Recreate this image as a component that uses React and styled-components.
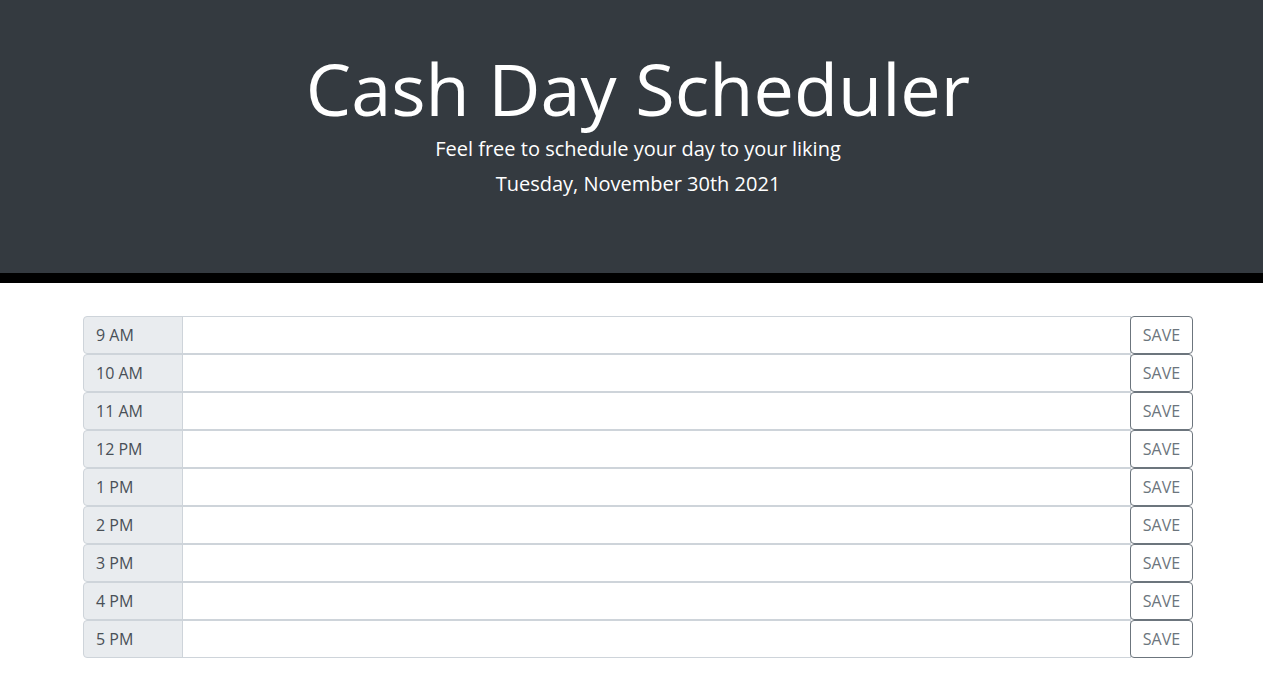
import React from "react";
import styled, { createGlobalStyle } from "styled-components";

const Global = createGlobalStyle`
  html, body { margin: 0; padding: 0; background: #fff; }
  body { font-family: "Open Sans", "Liberation Sans", sans-serif; color: #212529; }
  * { box-sizing: border-box; }
`;

const Header = styled.header`
  background: #343a40;
  border-bottom: 10px solid #000;
  height: 283px;
  padding: 45px 0 0 13px;
  text-align: center;
  color: #fff;
`;

const Title = styled.h1`
  margin: 0;
  font-size: 72px;
  font-weight: 400;
  line-height: 86px;
`;

const Lead = styled.p`
  margin: 0;
  font-size: 20px;
  font-weight: 400;
  line-height: 35px;
`;

const Main = styled.main`
  padding: 33px 0 0 13px;
`;

const Container = styled.div`
  width: 1110px;
  margin: 0 auto;
`;

const Row = styled.div`
  display: flex;
  height: 38px;
`;

const Hour = styled.div`
  width: 100px;
  flex: none;
  display: flex;
  align-items: center;
  padding: 0 12px;
  background: #e9ecef;
  border: 1px solid #ced4da;
  border-radius: 4px 0 0 4px;
  color: #495057;
  font-size: 16px;
`;

const Text = styled.textarea`
  flex: 1;
  min-width: 0;
  height: 38px;
  margin: 0 0 0 -1px;
  border: 1px solid #ced4da;
  border-radius: 0;
  resize: none;
  font-family: inherit;
  font-size: 16px;
  padding: 6px 12px;
  background: #fff;
  outline: none;
`;

const Save = styled.button`
  width: 63px;
  flex: none;
  margin-left: -1px;
  background: #fff;
  border: 1px solid #6c757d;
  border-radius: 4px;
  color: #6c757d;
  font-family: inherit;
  font-size: 16px;
  text-transform: uppercase;
  padding: 0;
  cursor: pointer;
`;

const hours = ["9 AM", "10 AM", "11 AM", "12 PM", "1 PM", "2 PM", "3 PM", "4 PM", "5 PM"];

export default function App() {
  return (
    <>
      <Global />
      <Header>
        <Title>Cash Day Scheduler</Title>
        <Lead>Feel free to schedule your day to your liking</Lead>
        <Lead>Tuesday, November 30th 2021</Lead>
      </Header>
      <Main>
        <Container>
          {hours.map((h) => (
            <Row key={h}>
              <Hour>{h}</Hour>
              <Text />
              <Save>Save</Save>
            </Row>
          ))}
        </Container>
      </Main>
    </>
  );
}
